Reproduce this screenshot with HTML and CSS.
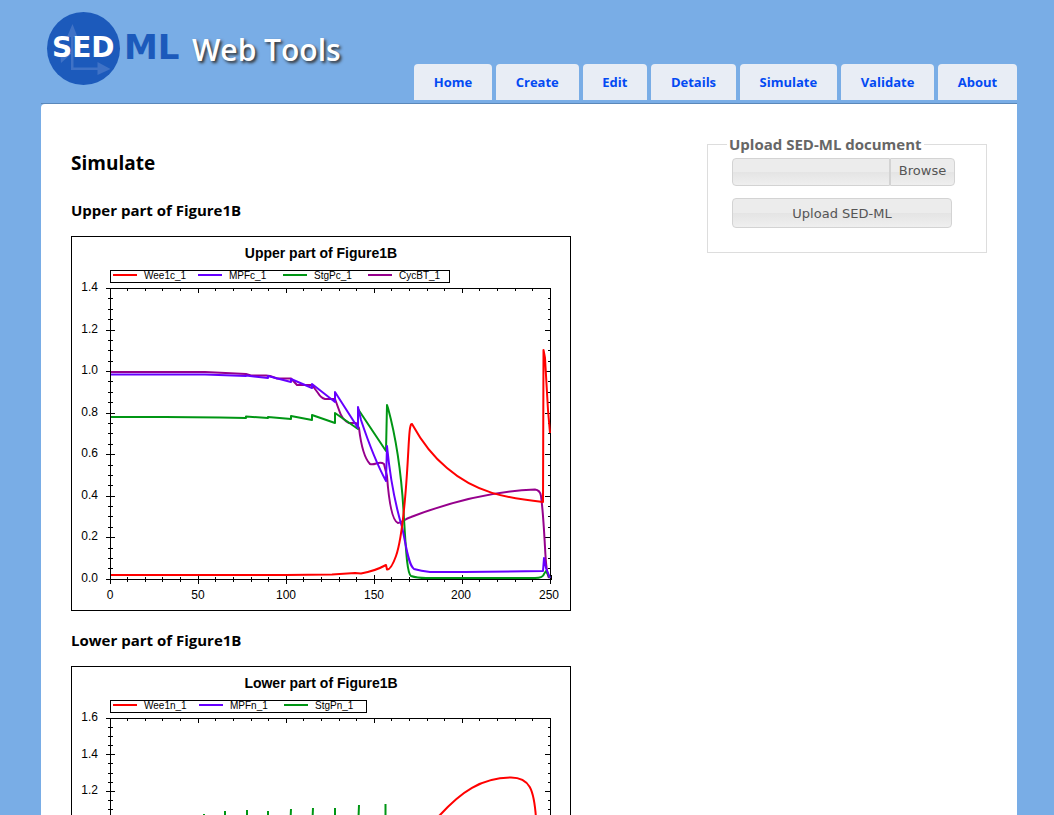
FILE: index.html
```
<!DOCTYPE html>
<html lang="en">
<head>
<meta charset="utf-8">
<title>SED-ML Web Tools - Simulate</title>
<link rel="stylesheet" href="styles.css">
</head>
<body>
<header class="header">
  <a class="brand" href="#">
    <svg class="logo" width="144" height="80" viewBox="44 8 144 80" role="img" aria-label="SED-ML">
      <circle cx="83.500" cy="48.500" r="36.500" fill="#1c5abb"/>
      <g fill="#3f72c6" stroke="none">
        <path d="M72.500 24l5 13h-4v30.500h24v-5.500l13 7-13 6v-5H71V37h-4z"/>
        <path d="M60 53h12l-11 10z"/>
      </g>
      <text class="logo-sed" x="52" y="57">SED</text>
      <text class="logo-ml" x="124" y="59">ML</text>
    </svg>
    <span class="brand-name">Web Tools</span>
  </a>
  <nav class="tabs">
    <a href="#">Home</a>
    <a href="#">Create</a>
    <a href="#">Edit</a>
    <a href="#">Details</a>
    <a href="#">Simulate</a>
    <a href="#">Validate</a>
    <a href="#">About</a>
  </nav>
</header>
<main class="content">
  <section class="results">
    <h1>Simulate</h1>
    <h2>Upper part of Figure1B</h2>
    <svg class="chart" viewBox="71 236 500 375" role="img" aria-label="Upper part of Figure1B">
      <rect class="frame" x="71.500" y="236.500" width="499" height="374"/>
      <text class="chart-title" x="321" y="258">Upper part of Figure1B</text>
      <rect class="frame" x="110.500" y="270.500" width="339" height="12"/>
      <g class="curves">
        <path class="red" d="M113 275H137"/>
        <path class="blue" d="M198 275H222"/>
        <path class="green" d="M283 275H307"/>
        <path class="purple" d="M368 275H392"/>
      </g>
      <g class="legend-text">
        <text x="144" y="279">Wee1c_1</text>
        <text x="229" y="279">MPFc_1</text>
        <text x="314" y="279">StgPc_1</text>
        <text x="399" y="279">CycBT_1</text>
      </g>
      <g class="axis">
        <path d="M106 288.500H550.500V579.500M110.500 288V584M106 579.500H551V575"/>
        <path d="M106 330.500h9M106 371.500h9M106 413.500h9M106 454.500h9M106 496.500h9M106 537.500h9"/>
        <path d="M545 330.500h6M545 371.500h6M545 413.500h6M545 454.500h6M545 496.500h6M545 537.500h6"/>
        <path d="M198.500 575v9M286.500 575v9M374.500 575v9M462.500 575v9M550.500 575v9"/>
        <path d="M198.500 288v5M286.500 288v5M374.500 288v5M462.500 288v5"/>
        <path d="M108 298.500h5M108 309.500h5M108 319.500h5M108 340.500h5M108 350.500h5M108 361.500h5M108 381.500h5M108 392.500h5M108 402.500h5M108 423.500h5M108 433.500h5M108 444.500h5M108 465.500h5M108 475.500h5M108 485.500h5M108 506.500h5M108 516.500h5M108 527.500h5M108 548.500h5M108 558.500h5M108 568.500h5"/>
        <path d="M548 298.500h3M548 309.500h3M548 319.500h3M548 340.500h3M548 350.500h3M548 361.500h3M548 381.500h3M548 392.500h3M548 402.500h3M548 423.500h3M548 433.500h3M548 444.500h3M548 465.500h3M548 475.500h3M548 485.500h3M548 506.500h3M548 516.500h3M548 527.500h3M548 548.500h3M548 558.500h3M548 568.500h3"/>
        <path d="M127.500 577v5M145.500 577v5M162.500 577v5M180.500 577v5M215.500 577v5M233.500 577v5M251.500 577v5M268.500 577v5M303.500 577v5M321.500 577v5M339.500 577v5M356.500 577v5M391.500 577v5M409.500 577v5M427.500 577v5M444.500 577v5M479.500 577v5M497.500 577v5M515.500 577v5M532.500 577v5"/>
        <path d="M127.500 288v3M145.500 288v3M162.500 288v3M180.500 288v3M215.500 288v3M233.500 288v3M251.500 288v3M268.500 288v3M303.500 288v3M321.500 288v3M339.500 288v3M356.500 288v3M391.500 288v3M409.500 288v3M427.500 288v3M444.500 288v3M479.500 288v3M497.500 288v3M515.500 288v3M532.500 288v3"/>
      </g>
      <g class="curves">
        <path class="purple" d="M111 372H205L246 374L251 375.500H266L270 376L277 378.500H291L297 385H312L318 393Q321 398 325 399H335L339 410Q342 420 349 423H356L359 428C361 445 364 458 370 464C375 466 379 460 384 464L387 476C389 503 392 521 398 523C402 523 404 519 411 517C450 502 495 491 535 489.500Q540 490 541 496C543 510 544 530 545 547C546 568 547 575 549 578"/>
        <path class="green" d="M111 417H165L220 417.500L246 418V416.500L268 418V417L291 419V416L312 420V415L335 423V413L358 429V409L360 412L386 451L387 405L388 408C397 441 402 480 404 519C406 550 407 573 411 576Q417 578 426 578H535Q543 578 544 574L546 571L550 578"/>
        <path class="blue" d="M111 374.500H205L246 376V375.500L268 378V376L291 382V379L312 388V384L335 402V392L358 428V407L361 420Q374 459 386 481L387 446C390 477 396 507 402 527C406 544 408 565 414 569Q421 571 430 572H465L543 571L544 558L546 568L550 578"/>
        <path class="red" d="M111 575H285L332 574.500L355 573L361 573.500Q375 571 386 565L387 569.500Q391 570 396 556C402 539 405 503 407 473C409 444 409 423 412 424C423 444 436 459 447 468C476 493 506 498 543 502L543.500 350L545 358L548 410L550 433"/>
      </g>
      <g class="labels-y">
        <text x="98" y="291">1.4</text>
        <text x="98" y="333">1.2</text>
        <text x="98" y="374">1.0</text>
        <text x="98" y="416">0.8</text>
        <text x="98" y="457">0.6</text>
        <text x="98" y="499">0.4</text>
        <text x="98" y="540">0.2</text>
        <text x="98" y="582">0.0</text>
      </g>
      <g class="labels-x">
        <text x="110" y="599">0</text>
        <text x="198" y="599">50</text>
        <text x="286" y="599">100</text>
        <text x="374" y="599">150</text>
        <text x="461" y="599">200</text>
        <text x="549" y="599">250</text>
      </g>
    </svg>
    <h2>Lower part of Figure1B</h2>
    <svg class="chart" viewBox="71 666 500 375" role="img" aria-label="Lower part of Figure1B">
      <rect class="frame" x="71.500" y="666.500" width="499" height="374"/>
      <text class="chart-title" x="321" y="688">Lower part of Figure1B</text>
      <rect class="frame" x="110.500" y="700.500" width="256" height="12"/>
      <g class="curves">
        <path class="red" d="M113 705H137"/>
        <path class="blue" d="M199 705H223"/>
        <path class="green" d="M284 705H308"/>
      </g>
      <g class="legend-text">
        <text x="144" y="709">Wee1n_1</text>
        <text x="230" y="709">MPFn_1</text>
        <text x="315" y="709">StgPn_1</text>
      </g>
      <g class="axis">
        <path d="M106 718.500H550.500V1009.500M110.500 718V1014M106 1009.500H551"/>
        <path d="M106 754.500h9M106 791.500h9M545 754.500h6M545 791.500h6"/>
        <path d="M108 727.500h5M108 736.500h5M108 745.500h5M108 763.500h5M108 773.500h5M108 782.500h5M108 800.500h5M108 809.500h5"/>
        <path d="M548 727.500h3M548 736.500h3M548 745.500h3M548 763.500h3M548 773.500h3M548 782.500h3M548 800.500h3M548 809.500h3"/>
        <path d="M198.500 718v5M286.500 718v5M374.500 718v5M462.500 718v5"/>
        <path d="M127.500 718v3M145.500 718v3M162.500 718v3M180.500 718v3M215.500 718v3M233.500 718v3M251.500 718v3M268.500 718v3M303.500 718v3M321.500 718v3M339.500 718v3M356.500 718v3M391.500 718v3M409.500 718v3M427.500 718v3M444.500 718v3M479.500 718v3M497.500 718v3M515.500 718v3M532.500 718v3"/>
      </g>
      <g class="curves">
        <path class="green" d="M204 830V814M225 830V811M247 830V810M268 830V811M290 830L291 809M312 830L313 808M335 830V808M358 830L359 805M385.500 830V804"/>
        <path class="red" d="M424 830L440 815C461 792 481 778 510 777.500C530 777 534 790 536 818L537 830"/>
      </g>
      <g class="labels-y">
        <text x="98" y="721">1.6</text>
        <text x="98" y="758">1.4</text>
        <text x="98" y="794">1.2</text>
      </g>
    </svg>
  </section>
  <aside class="sidebar">
    <form>
      <fieldset class="upload">
        <legend>Upload SED-ML document</legend>
        <div class="file-row">
          <input class="file-name" type="text" aria-label="SED-ML document" readonly>
          <button class="browse" type="button">Browse</button>
        </div>
        <button class="submit" type="button">Upload SED-ML</button>
      </fieldset>
    </form>
  </aside>
</main>
</body>
</html>
```
FILE: styles.css
```
* {
  box-sizing: border-box;
}

html {
  background: #79ade6;
}

body {
  margin: 0 37px 0 41px;
  font-family: "Open Sans", "Noto Sans", sans-serif;
  color: #000;
}

.header {
  display: flex;
  justify-content: space-between;
  align-items: flex-end;
  height: 104px;
  padding-bottom: 3px;
  border-bottom: 1px solid #5a88ba;
}

.brand {
  display: flex;
  align-self: flex-start;
  gap: 4px;
  padding: 8px 0 0 3px;
  color: #fff;
  text-decoration: none;
}

.logo {
  display: block;
}

.logo-sed,
.logo-ml {
  font-family: "DejaVu Sans", sans-serif;
  font-weight: bold;
}

.logo-sed {
  font-size: 28px;
  fill: #fff;
}

.logo-ml {
  font-size: 34px;
  fill: #1c5abb;
}

.brand-name {
  padding-top: 21px;
  font-size: 30px;
  font-weight: 600;
  line-height: 42px;
  text-shadow: 2px 2px 3px #333;
  white-space: nowrap;
}

.tabs {
  display: flex;
  gap: 4px;
  width: 603px;
}

.tabs a {
  flex: 1 0 auto;
  padding: 0 18px;
  border-radius: 4px 4px 0 0;
  background: #e8edf5;
  color: #034af3;
  font-size: 13px;
  font-weight: bold;
  line-height: 36px;
  text-align: center;
  text-decoration: none;
}

.content {
  display: flex;
  justify-content: space-between;
  align-items: flex-start;
  padding: 30px;
  border-radius: 4px 0 0 0;
  background: #fff;
}

.results {
  flex: 0 1 500px;
}

h1 {
  margin: 14px 0 21px;
  font-size: 19px;
  line-height: 30px;
}

h2 {
  margin: 0;
  padding-bottom: 15px;
  font-size: 15px;
  line-height: 22px;
}

.chart {
  display: block;
  width: 100%;
  margin-bottom: 18px;
}

.frame {
  fill: #fff;
  stroke: #000;
}

.chart text {
  font-family: "Liberation Sans", Arial, sans-serif;
  font-size: 12px;
}

.chart .chart-title {
  font-size: 14px;
  font-weight: bold;
  text-anchor: middle;
}

.chart .legend-text text {
  font-size: 10px;
}

.labels-y {
  text-anchor: end;
}

.labels-x {
  text-anchor: middle;
}

.axis {
  fill: none;
  stroke: #000;
  shape-rendering: crispEdges;
}

.curves {
  fill: none;
  stroke-width: 2;
  stroke-linejoin: round;
}

.red {
  stroke: #f00;
}

.blue {
  stroke: #60f;
}

.green {
  stroke: #009614;
}

.purple {
  stroke: #96008c;
}

.sidebar {
  flex: 0 0 280px;
}

.upload {
  display: flex;
  flex-direction: column;
  align-items: flex-start;
  gap: 12px;
  margin: 0;
  padding: 4px 24px 24px;
  border: 1px solid #ddd;
}

.upload legend {
  margin-left: -5px;
  padding: 0 2px;
  color: #666;
  font-size: 15px;
  font-weight: bold;
  line-height: 20px;
  white-space: nowrap;
}

.file-row {
  display: flex;
}

.file-name,
.browse,
.submit {
  border: 1px solid #d3d3d3;
  background: linear-gradient(#ececec 50%, #e4e4e4 50%, #efefef);
  color: #555;
  font-family: "DejaVu Sans", Verdana, sans-serif;
  font-size: 13px;
}

.file-name {
  width: 158px;
  height: 28px;
  border-radius: 4px 0 0 4px;
}

.browse {
  width: 65px;
  padding: 0 0 4px;
  border-radius: 0 4px 4px 0;
}

.submit {
  width: 220px;
  height: 30px;
  border-radius: 4px;
}
```
